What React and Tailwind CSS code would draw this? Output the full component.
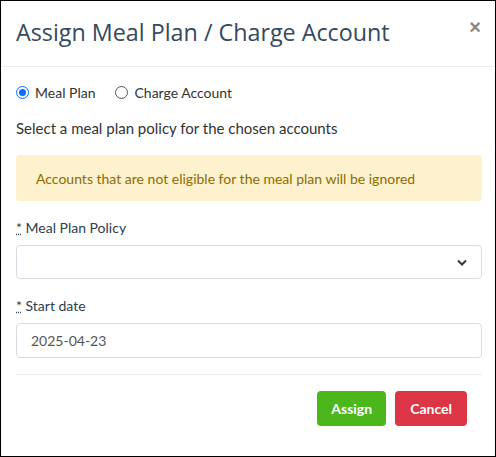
export default function App() {
  return (
    <div className="w-[496px] h-[457px] border border-black bg-white flex flex-col text-[#333] font-['Lato','Liberation_Sans',sans-serif]">
      <div className="flex items-start justify-between h-[66px] border-b border-[#e9ecef] pl-[15px] pr-[14px] pt-[13px]">
        <h1 className="text-[23.3px] leading-[36px] text-[#34495e] font-['Open_Sans',sans-serif]">
          Assign Meal Plan / Charge Account
        </h1>
        <span className="text-[20px] leading-[26px] font-bold text-[#888] font-['Liberation_Sans',sans-serif]">×</span>
      </div>
      <div className="pl-[15px] pr-[13px] pt-[15px] flex flex-col">
        <div className="flex items-center gap-[20px] text-[14px] text-[#333] h-[20px]">
          <label className="flex items-center gap-[6px]">
            <span className="w-[13px] h-[13px] rounded-full border-[1.5px] border-[#0d6efd] flex items-center justify-center">
              <span className="w-[7px] h-[7px] rounded-full bg-[#0d6efd]" />
            </span>
            Meal Plan
          </label>
          <label className="flex items-center gap-[6px]">
            <span className="w-[13px] h-[13px] rounded-full border border-[#555]" />
            Charge Account
          </label>
        </div>
        <p className="mt-[16px] text-[15px] leading-[20px] text-[#333]">
          Select a meal plan policy for the chosen accounts
        </p>
        <div className="mt-[17px] h-[46px] rounded-[4px] bg-[#fdf2cd] text-[#8f6b00] text-[14px] flex items-center px-[20px]">
          Accounts that are not eligible for the meal plan will be ignored
        </div>
        <label className="mt-[17px] text-[14px] leading-[20px] text-[#2c3e50]">
          <span className="underline decoration-dotted">*</span> Meal Plan Policy
        </label>
        <div className="mt-[7px] h-[34px] rounded-[4px] border border-[#d8dce3] flex items-center justify-end pr-[14px]">
          <svg width="10" height="7" viewBox="0 0 10 7">
            <path d="M1 1.5 L5 5.5 L9 1.5" fill="none" stroke="#343a40" strokeWidth="2" />
          </svg>
        </div>
        <label className="mt-[17px] text-[14px] leading-[20px] text-[#2c3e50]">
          <span className="underline decoration-dotted">*</span> Start date
        </label>
        <div className="mt-[7px] h-[35px] rounded-[4px] border border-[#d8dce3] flex items-center px-[14px] text-[14px] text-[#555]">
          2025-04-23
        </div>
        <div className="mt-[16px] border-t border-[#e9ecef]" />
        <div className="mt-[16px] flex justify-end gap-[9px] pr-[15px]">
          <button className="h-[35px] px-[14px] rounded-[4px] bg-[#4cb71a] text-white text-[14px] font-bold">Assign</button>
          <button className="h-[35px] px-[15px] rounded-[4px] bg-[#dc3545] text-white text-[14px] font-bold">Cancel</button>
        </div>
      </div>
    </div>
  );
}
